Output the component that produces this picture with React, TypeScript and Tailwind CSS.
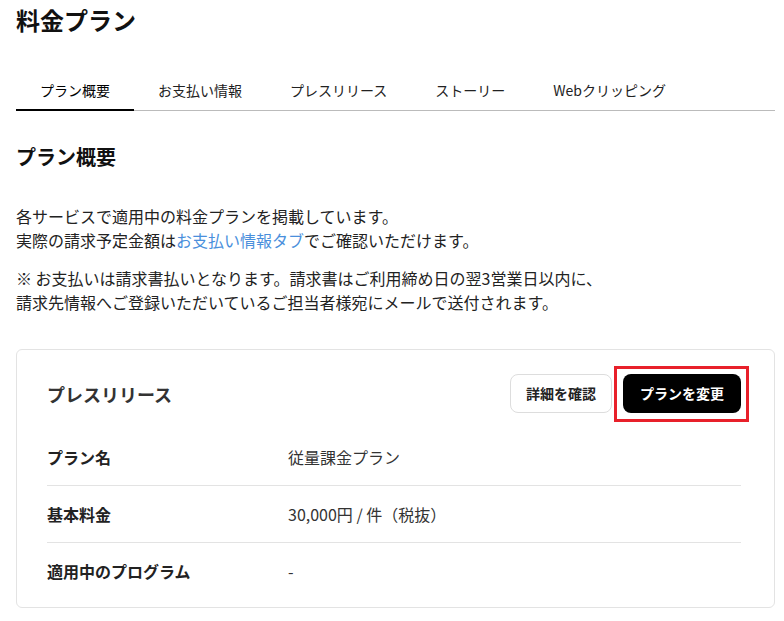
import React from 'react';

const tabs = ['プラン概要', 'お支払い情報', 'プレスリリース', 'ストーリー', 'Webクリッピング'];

const rows = [
  { label: 'プラン名', value: '従量課金プラン' },
  { label: '基本料金', value: '30,000円 / 件（税抜）' },
  { label: '適用中のプログラム', value: '-' },
];

export default function App() {
  return (
    <div
      className="min-h-[621px] bg-white px-4 text-[#222]"
      style={{ fontFamily: '"Noto Sans CJK JP", "Noto Sans", sans-serif' }}
    >
      <h1 className="pt-1 text-[24px] font-bold leading-[32px] text-[#111]">料金プラン</h1>

      <nav className="mt-[34px] flex w-[759px] border-b border-[#bbb]">
        {tabs.map((t, i) => (
          <div
            key={t}
            className={
              i === 0
                ? '-mb-px border-b-2 border-black px-6 pt-[10px] pb-[9px] text-[14px] leading-[20px] text-black'
                : 'px-6 pt-[10px] pb-[10px] text-[14px] leading-[20px] text-[#222]'
            }
          >
            {t}
          </div>
        ))}
      </nav>

      <h2 className="mt-8 text-[20px] font-bold leading-[28px] text-[#111]">プラン概要</h2>

      <p className="mt-[33px] text-[16px] leading-[24px]">
        各サービスで適用中の料金プランを掲載しています。
        <br />
        実際の請求予定金額は<a className="text-[#4a8fdc]">お支払い情報タブ</a>でご確認いただけます。
      </p>
      <p className="mt-[14px] text-[16px] leading-[24px]">
        ※ お支払いは請求書払いとなります。請求書はご利用締め日の翌3営業日以内に、
        <br />
        請求先情報へご登録いただいているご担当者様宛にメールで送付されます。
      </p>

      <section className="mt-[35px] w-[759px] rounded-md border border-[#e3e3e3] pt-6 pr-[33px] pb-2 pl-[30px]">
        <div className="flex items-center justify-between">
          <h3 className="text-[18px] font-bold leading-[26px] text-[#333]">プレスリリース</h3>
          <div className="flex items-center gap-[11px]">
            <button className="h-[39px] w-[102px] rounded-lg border border-[#ddd] bg-white text-[14px] font-bold text-[#222]">
              詳細を確認
            </button>
            <span className="relative">
              <button className="h-[39px] w-[118px] rounded-lg bg-black text-[14px] font-bold text-white">
                プランを変更
              </button>
              {/* highlight frame */}
              <span className="pointer-events-none absolute -top-[8px] -right-[8px] -bottom-[9px] -left-[9px] border-3 border-[#e8202a]" />
            </span>
          </div>
        </div>

        <div className="mt-4">
          {rows.map((r, i) => (
            <div
              key={r.label}
              className={
                i < rows.length - 1
                  ? 'flex h-[57px] items-center border-b border-[#e3e3e3]'
                  : 'flex h-[56px] items-center'
              }
            >
              <div className="w-[241px] text-[16px] font-bold text-[#222]">{r.label}</div>
              <div className="text-[16px] text-[#333]">{r.value}</div>
            </div>
          ))}
        </div>
      </section>
    </div>
  );
}
